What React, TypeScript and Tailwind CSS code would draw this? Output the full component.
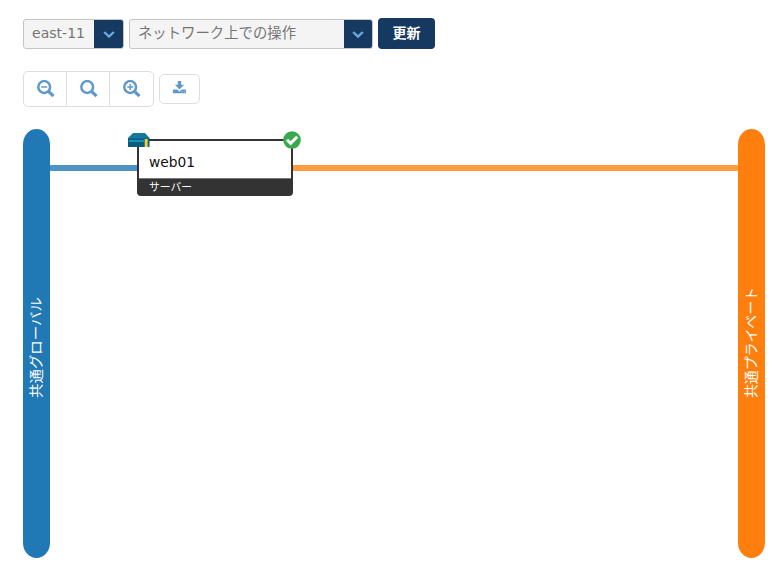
function Chevron({ width }: { width: string }) {
  return (
    <span className={`flex items-center justify-center bg-[#153961] ${width}`}>
      <svg width="12" height="9" viewBox="0 0 12 9" fill="none" stroke="#6ea7dc" strokeWidth="2.4">
        <path d="M1.2 2 6 6.6 10.8 2" />
      </svg>
    </span>
  );
}

type SelectProps = { label: string; width: string; textWidth: number; arrow: string; size: number };

function Select({ label, width, textWidth, arrow, size }: SelectProps) {
  return (
    <div className={`mt-px flex h-[30px] overflow-hidden rounded-[3px] border border-[#c5c5c5] bg-[#f4f4f4] ${width}`}>
      <svg className="h-7 flex-1">
        <text x="8" y="18" fontSize={size} fill="#747474" textLength={textWidth} lengthAdjust="spacingAndGlyphs">
          {label}
        </text>
      </svg>
      <Chevron width={arrow} />
    </div>
  );
}

function Magnifier({ sign }: { sign?: "plus" | "minus" }) {
  return (
    <svg width="18" height="18" viewBox="0 0 18 18" fill="none" stroke="currentColor">
      <circle cx="7.2" cy="7" r="5.9" strokeWidth="2.5" />
      <path d="m11.5 11.3 5 4.8" strokeWidth="3.2" />
      {sign && <path d="M4.2 7h6" strokeWidth="1.5" />}
      {sign === "plus" && <path d="M7.2 4v6" strokeWidth="1.5" />}
    </svg>
  );
}

function Download() {
  return (
    <svg width="13" height="13" viewBox="0 0 13 13" fill="currentColor">
      <path d="M4.8 0h3.4v3.7h3L6.5 8.5 1.8 3.7h3Z" />
      <path d="M0 8.6h4.3l2.2 1.8 2.2-1.8H13v3.6H0Z" />
      <path d="M8.5 10.5h.8v.8h-.8ZM10.9 10.5h.8v.8h-.8Z" fill="white" />
    </svg>
  );
}

function Segment({ label, color, width }: { label: string; color: string; width: number }) {
  return (
    <div className={`h-[429px] w-[27.4px] rounded-[13.7px/15.5px] ${color}`}>
      <svg width="27" height="429">
        <text
          transform="translate(17.7 269) rotate(-90)"
          fontSize="13.5"
          fill="white"
          textLength={width}
          lengthAdjust="spacingAndGlyphs"
        >
          {label}
        </text>
      </svg>
    </div>
  );
}

export default function App() {
  return (
    <main className="h-[578px] w-[783px] bg-white pt-[18px] pl-[23px] font-['DejaVu_Sans','Noto_Sans_CJK_JP',sans-serif]">
      <div className="flex h-[31px]">
        <Select label="east-11" width="w-[101px]" textWidth={53} arrow="w-[29px]" size={14} />
        <div className="ml-[5px] flex font-['Noto_Sans_CJK_JP',sans-serif]">
          <Select label="ネットワーク上での操作" width="w-[244px]" textWidth={158} arrow="w-[28px]" size={14.5} />
        </div>
        <button className="ml-[5px] h-[31px] w-[57px] rounded bg-[#153961] pb-[3px] font-['Noto_Sans_CJK_JP',sans-serif] text-[14px] leading-5 font-bold text-white">
          更新
        </button>
      </div>
      <div className="mt-[22px] flex h-9 items-center text-[#6098cc]">
        <div className="flex h-9 w-[131px] divide-x divide-[#dedede] rounded-[5px] border border-[#dedede]">
          <button className="flex w-[43px] items-center justify-center pb-px pl-[2px]"><Magnifier sign="minus" /></button>
          <button className="flex w-[43px] items-center justify-center pb-px pl-[2px]"><Magnifier /></button>
          <button className="flex flex-1 items-center justify-center pb-px"><Magnifier sign="plus" /></button>
        </div>
        <button className="ml-[5px] flex h-[30px] w-[41px] items-center justify-center rounded-[5px] border border-[#dedede] pb-[3px]">
          <Download />
        </button>
      </div>
      <div className="mt-[22px] flex">
        <Segment label="共通グローバル" color="bg-[#2078b4]" width={101} />
        <div className="mt-[36px] h-[5.5px] w-[87px] bg-[#4d93c3]" />
        <div className="relative mt-[10px] flex h-[57px] w-[156px] flex-col rounded-b-[4px] border-2 border-[#333] bg-white">
          <svg className="h-[37px] w-full">
            <text x="10" y="25.5" fontSize="13.5" fill="#111" textLength="46" lengthAdjust="spacingAndGlyphs">web01</text>
          </svg>
          <svg className="h-[16px] w-full border-t border-[#777] bg-[#333]">
            <text x="10" y="12" fontSize="11" fill="white" textLength="43" lengthAdjust="spacingAndGlyphs">サーバー</text>
          </svg>
          <svg className="absolute -top-[9px] -left-[11.5px]" width="22" height="16">
            <path d="M5 1h12l4.5 5v1H0V6Z" fill="#147a9d" />
            <path d="M0 6.5h21.5V15H0Z" fill="#085d7e" />
            <path d="M1 8h15v2H1Z" fill="#1793b5" />
            <path d="M16.7 7h3v8h-3Z" fill="#f5cf3b" />
          </svg>
          <svg className="absolute -top-[10px] -right-[10px]" width="18" height="18">
            <circle cx="9" cy="9" r="8.8" fill="#39aa4b" />
            <path d="m4 8.7 3.6 3.7L14.2 5.8" fill="none" stroke="white" strokeWidth="3" />
          </svg>
        </div>
        <div className="mt-[36px] h-[5.5px] w-[444.7px] bg-[#ff9a40]" />
        <Segment label="共通プライベート" color="bg-[#ff7f0e]" width={111} />
      </div>
    </main>
  );
}
